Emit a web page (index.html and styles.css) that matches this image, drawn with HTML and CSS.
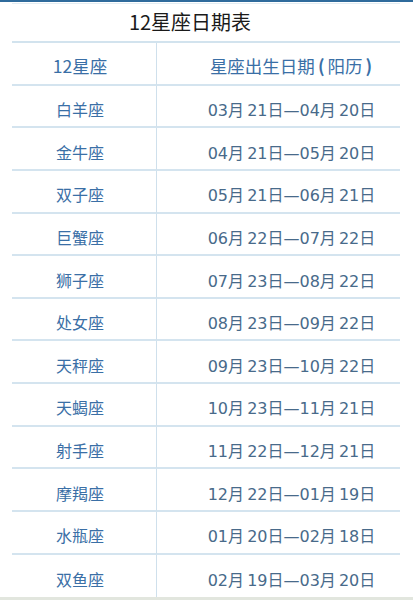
FILE: index.html
```html
<!DOCTYPE html>
<html lang="zh">
<head>
<meta charset="utf-8">
<link rel="stylesheet" href="styles.css">
</head>
<body>
<div class="page">
  <div class="topbar"></div>
  <div class="table">
    <div class="title">12星座日期表</div>
    <div class="grid">
      <div class="cell name head">12星座</div><div class="cell date head">星座出生日期<span class="paren">(</span>阳历<span class="paren">)</span></div>
      <div class="cell name">白羊座</div><div class="cell date">03月 21日—04月 20日</div>
      <div class="cell name">金牛座</div><div class="cell date">04月 21日—05月 20日</div>
      <div class="cell name">双子座</div><div class="cell date">05月 21日—06月 21日</div>
      <div class="cell name">巨蟹座</div><div class="cell date">06月 22日—07月 22日</div>
      <div class="cell name">狮子座</div><div class="cell date">07月 23日—08月 22日</div>
      <div class="cell name">处女座</div><div class="cell date">08月 23日—09月 22日</div>
      <div class="cell name">天秤座</div><div class="cell date">09月 23日—10月 22日</div>
      <div class="cell name">天蝎座</div><div class="cell date">10月 23日—11月 21日</div>
      <div class="cell name">射手座</div><div class="cell date">11月 22日—12月 21日</div>
      <div class="cell name">摩羯座</div><div class="cell date">12月 22日—01月 19日</div>
      <div class="cell name">水瓶座</div><div class="cell date">01月 20日—02月 18日</div>
      <div class="cell name last">双鱼座</div><div class="cell date last">02月 19日—03月 20日</div>
    </div>
  </div>
  <div class="bottombar"></div>
</div>
</body>
</html>
```
FILE: styles.css
```css
html, body {
  margin: 0;
  padding: 0;
  background: #ffffff;
}
.page {
  width: 413px;
  height: 600px;
  display: flex;
  flex-direction: column;
  font-family: "DejaVu Sans", "Noto Sans CJK SC", sans-serif;
}
.topbar {
  height: 2px;
  background: #2f6b9c;
  flex: none;
}
.table {
  flex: 1;
  margin: 0 13px 0 12px;
  display: flex;
  flex-direction: column;
}
.title {
  height: 40px;
  border-top: 1px solid #e3edf3;
  margin-top: 1px;
  box-sizing: border-box;
  display: flex;
  align-items: center;
  justify-content: center;
  padding-right: 32px;
  padding-bottom: 2px;
  font-family: "Noto Sans CJK SC", sans-serif;
  font-size: 20px;
  color: #1a1a1a;
  border-bottom: 2px solid #d2e3ee;
}
.grid {
  flex: 1;
  display: grid;
  grid-template-columns: 145px 1fr;
  grid-auto-rows: 42.65px;
}
.cell {
  box-sizing: border-box;
  display: flex;
  align-items: center;
  justify-content: center;
  padding-top: 6px;
  border-bottom: 2px solid #d4e4ef;
  font-size: 16px;
}
.cell.head {
  padding-top: 4px;
  font-size: 17.5px;
}
.cell.last {
  border-bottom: none;
}
.name {
  border-right: 1px solid #cfe0ec;
  color: #3a6fa6;
  font-family: "Noto Sans CJK SC", sans-serif;
  padding-right: 8px;
}
.date {
  color: #486a8a;
  padding-left: 26px;
  font-size: 16px;
  word-spacing: -2px;
}
.head.date {
  font-family: "Noto Sans CJK SC", sans-serif;
  color: #3a6fa6;
  padding-left: 28px;
}
.paren {
  font-weight: bold;
  padding: 0 3px;
}
.bottombar {
  height: 5px;
  background: #e2e6de;
  flex: none;
}
```
